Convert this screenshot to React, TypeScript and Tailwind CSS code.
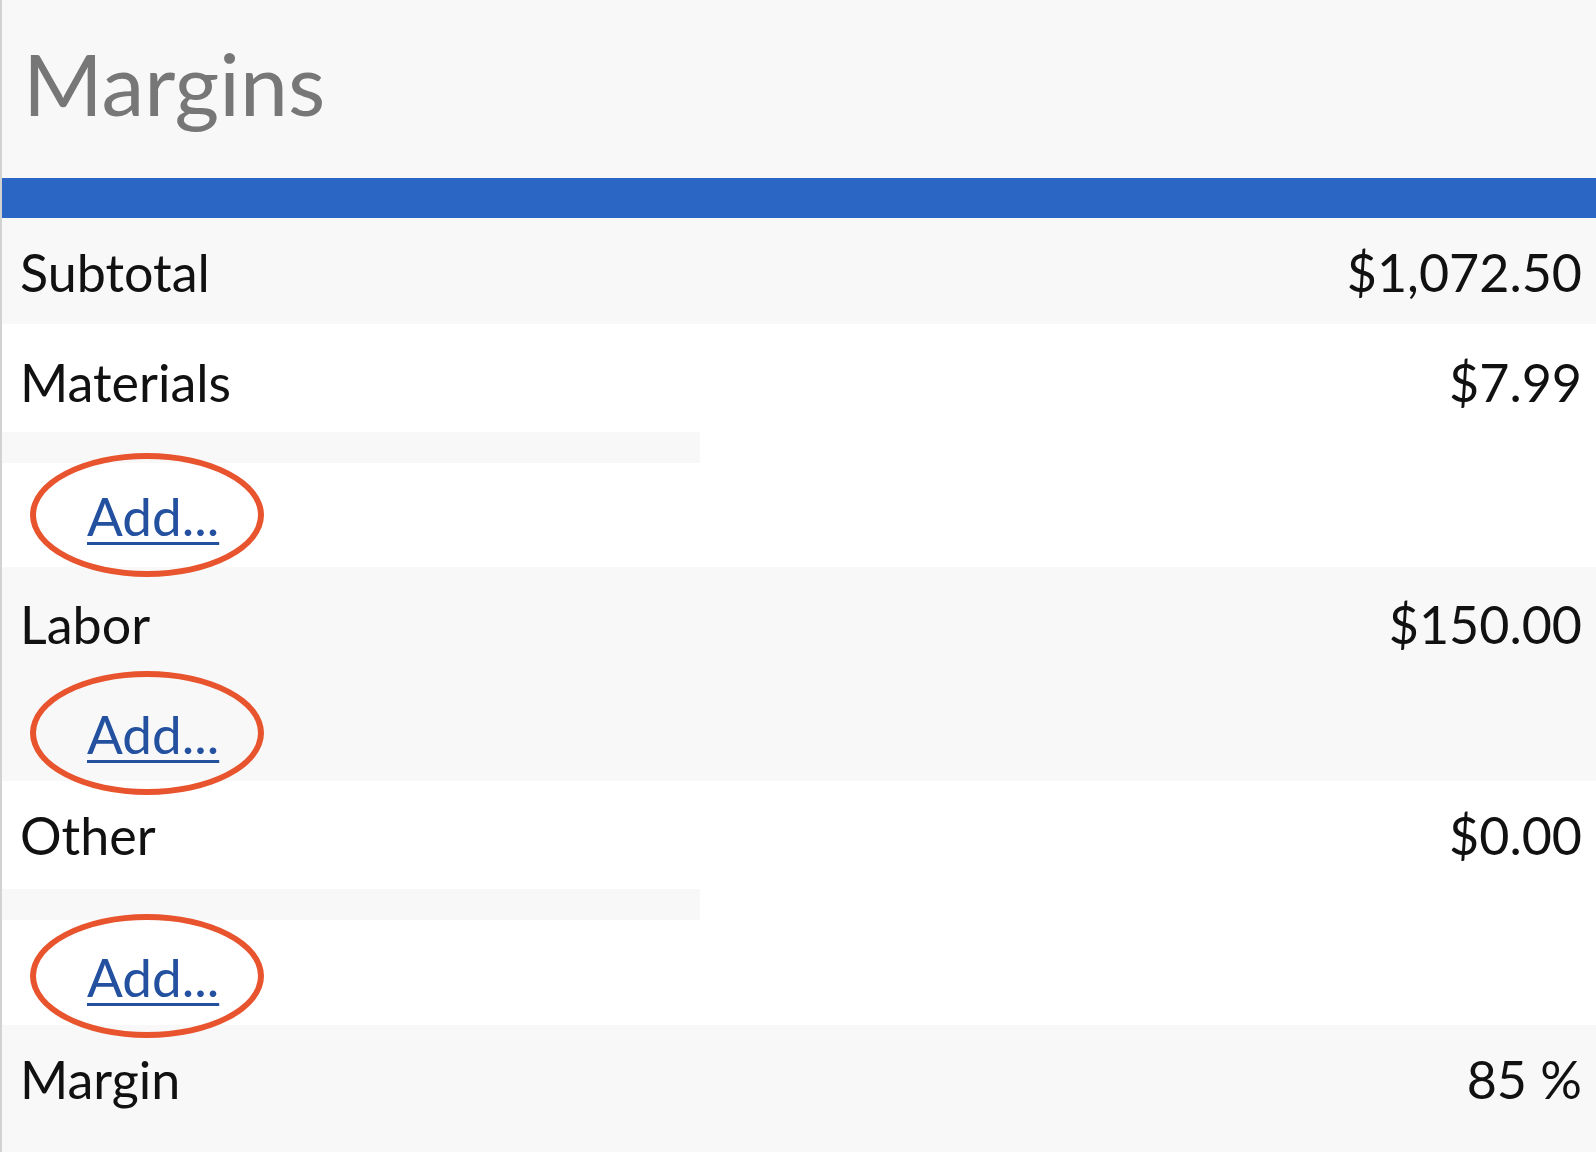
import type { ReactNode } from "react";

const font = { fontFamily: "Lato, 'Open Sans', sans-serif" };

type RowProps = {
  label: string;
  value?: string;
  className?: string;
  children?: ReactNode;
};

const Row = ({ label, value, className = "" }: RowProps) => (
  <div className={`flex justify-between items-start pl-[18px] pr-[14px] ${className}`}>
    <span className="text-[52px] leading-none text-[#111]">{label}</span>
    {value && <span className="text-[52px] leading-none text-[#111]">{value}</span>}
  </div>
);

// red ellipse annotation around the link
const AddLink = ({ className = "", ring = "" }: { className?: string; ring?: string }) => (
  <div className={`relative pl-[85px] ${className}`}>
    <div
      className={`absolute left-[28px] w-[234px] h-[124px] rounded-[50%] border-[6px] border-[#e8542e] ${ring}`}
    />
    <a
      href="#"
      className="relative text-[53px] leading-none text-[#2450a0] underline decoration-[3px] underline-offset-[6px]"
    >
      Add...
    </a>
  </div>
);

export default function App() {
  return (
    <div
      style={font}
      className="w-full h-[1152px] overflow-hidden bg-white border-l-2 border-[#d2d2d2]"
    >
      <div className="h-[178px] bg-[#f8f8f8] pl-[21px] pt-[40px]">
        <h1 className="text-[86px] leading-none text-[#777]">Margins</h1>
      </div>
      <div className="h-[40px] bg-[#2c66c4]" />

      <Row label="Subtotal" value="$1,072.50" className="h-[106px] pt-[28px] bg-[#f8f8f8]" />
      <Row label="Materials" value="$7.99" className="h-[108px] pt-[32px] bg-white" />
      <div className="h-[31px] w-[698px] bg-[#f8f8f8]" />
      <AddLink className="h-[104px] pt-[26px] bg-white" ring="top-[-10px]" />

      <div className="bg-[#f8f8f8]">
        <Row label="Labor" value="$150.00" className="h-[107px] pt-[31px]" />
        <AddLink className="h-[107px] pt-[33px]" ring="top-[-3px]" />
      </div>

      <Row label="Other" value="$0.00" className="h-[108px] pt-[28px] bg-white" />
      <div className="h-[31px] w-[698px] bg-[#f8f8f8]" />
      <AddLink className="h-[105px] pt-[30px] bg-white" ring="top-[-6px]" />

      <Row label="Margin" value="85 %" className="h-[127px] pt-[28px] bg-[#f8f8f8]" />
    </div>
  );
}
